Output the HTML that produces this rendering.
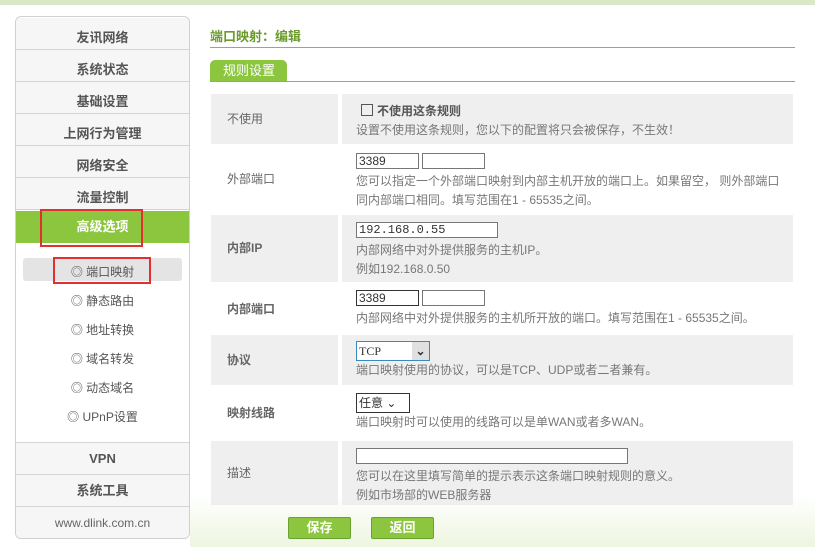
<!DOCTYPE html>
<html><head><meta charset="utf-8"><style>
*{margin:0;padding:0;box-sizing:border-box}
body{width:815px;height:547px;overflow:hidden;background:#fff;font-family:"Liberation Sans","Noto Sans CJK SC",sans-serif;font-size:12px;color:#666;position:relative}
.a{position:absolute}
.top{left:0;top:0;width:815px;height:5px;background:#dbe8c8}
.bg{left:190px;top:495px;width:625px;height:52px;background:linear-gradient(to bottom,#fff,#eef5e0)}
.side{left:15px;top:16px;width:175px;height:523px;border:1px solid #d0d0d0;border-radius:6px;background:#fff;overflow:hidden}
.it{position:absolute;left:0;width:173px;height:32px;line-height:32px;text-align:center;font-weight:bold;font-size:13px;color:#555;border-bottom:1px solid #d4d4d4;background:#f6f6f6;overflow:hidden}
.lo{line-height:40px}
.sub{position:absolute;left:0;width:173px;text-align:center;font-size:12px;color:#555}
.lab{position:absolute;left:211px;width:127px;background:#efefef;padding-left:16px;color:#666}
.val{position:absolute;left:342px;width:451px;background:#efefef;padding-left:14px;line-height:19px;color:#777}
.w{background:#fff}
.in{display:inline-block;height:16px;border:1px solid #777;background:#fff;font-size:12px;line-height:14px;padding-left:2px;color:#333;vertical-align:top}
.btn{position:absolute;top:517px;width:63px;height:22px;background:#8cc63f;border:1px solid #6aa230;color:#fff;font-weight:bold;text-align:center;line-height:20px;font-size:13px;border-radius:2px}
</style></head><body>
<div class="a top"></div>
<div class="a bg"></div>
<div class="a side">
<div class="it lo" style="top:1px">友讯网络</div>
<div class="it lo" style="top:33px">系统状态</div>
<div class="it lo" style="top:65px">基础设置</div>
<div class="it lo" style="top:97px">上网行为管理</div>
<div class="it lo" style="top:129px">网络安全</div>
<div class="it lo" style="top:161px">流量控制</div>
<div class="it" style="top:194px;background:#8cc63f;color:#fff;border:none;height:32px">高级选项</div>
<div class="a" style="left:24px;top:192px;width:103px;height:38px;border:2px solid #e03030"></div>
<div class="a" style="left:7px;top:241px;width:159px;height:23px;background:#e4e4e4;border-radius:3px"></div>
<div class="a" style="left:37px;top:240px;width:98px;height:27px;border:2px solid #e03030"></div>
<div class="sub" style="top:246px">◎ 端口映射</div>
<div class="sub" style="top:275px">◎ 静态路由</div>
<div class="sub" style="top:304px">◎ 地址转换</div>
<div class="sub" style="top:333px">◎ 域名转发</div>
<div class="sub" style="top:362px">◎ 动态域名</div>
<div class="sub" style="top:391px">◎ UPnP设置</div>
<div class="it" style="top:425px;border-top:1px solid #d4d4d4;height:33px">VPN</div>
<div class="it" style="top:458px">系统工具</div>
<div class="it" style="top:490px;font-weight:normal;font-size:12px;color:#666;border:none;height:33px">www.dlink.com.cn</div>
</div>
<div class="a" style="left:210px;top:26px;color:#6a9a2a;font-weight:bold;font-size:13px">端口映射：编辑</div>
<div class="a" style="left:210px;top:47px;width:585px;height:1px;background:#8cb84a"></div>
<div class="a" style="left:210px;top:60px;width:77px;height:22px;background:#8cc63f;border-radius:5px 5px 0 0;color:#fff;font-size:13px;line-height:22px;padding-left:13px">规则设置</div>
<div class="a" style="left:210px;top:81px;width:585px;height:1px;background:#8cb84a"></div>

<div class="lab" style="top:94px;height:50px;line-height:50px">不使用</div>
<div class="val" style="top:94px;height:50px;padding-top:8px"><span style="display:inline-block;width:12px;height:12px;border:1px solid #555;vertical-align:-1px;margin:0 4px 0 5px"></span><b style="color:#555">不使用这条规则</b><br>设置不使用这条规则，您以下的配置将只会被保存，不生效！</div>
<div class="lab w" style="top:146px;height:67px;line-height:67px">外部端口</div>
<div class="val w" style="top:146px;height:67px;padding-top:7px"><span class="in" style="width:63px">3389</span> <span class="in" style="width:63px"></span><br>您可以指定一个外部端口映射到内部主机开放的端口上。如果留空， 则外部端口<br>同内部端口相同。填写范围在1 - 65535之间。</div>
<div class="lab" style="top:215px;height:67px;line-height:67px;font-weight:bold">内部IP</div>
<div class="val" style="top:215px;height:67px;padding-top:7px"><span class="in" style="width:142px;font-family:'Liberation Mono',monospace">192.168.0.55</span><br>内部网络中对外提供服务的主机IP。<br>例如192.168.0.50</div>
<div class="lab w" style="top:283px;height:52px;line-height:52px;font-weight:bold">内部端口</div>
<div class="val w" style="top:283px;height:52px;padding-top:7px"><span class="in" style="width:63px;border-color:#333">3389</span> <span class="in" style="width:63px"></span><br>内部网络中对外提供服务的主机所开放的端口。填写范围在1 - 65535之间。</div>
<div class="lab" style="top:335px;height:50px;line-height:50px;font-weight:bold">协议</div>
<div class="val" style="top:335px;height:50px;padding-top:6px"><span class="in" style="width:74px;height:20px;line-height:18px;border-color:#3a8ac0;position:relative;font-family:'Liberation Serif',serif">TCP<span style="position:absolute;right:0;top:0;width:17px;height:18px;background:#e0e0e0;text-align:center;font-weight:bold">⌄</span></span><br>端口映射使用的协议，可以是TCP、UDP或者二者兼有。</div>
<div class="lab w" style="top:387px;height:52px;line-height:52px;font-weight:bold">映射线路</div>
<div class="val w" style="top:387px;height:52px;padding-top:6px"><span class="in" style="width:54px;height:20px;line-height:18px;border-color:#333">任意 ⌄</span><br>端口映射时可以使用的线路可以是单WAN或者多WAN。</div>
<div class="lab" style="top:441px;height:64px;line-height:64px">描述</div>
<div class="val" style="top:441px;height:64px;padding-top:7px"><span class="in" style="width:272px"></span><br>您可以在这里填写简单的提示表示这条端口映射规则的意义。<br>例如市场部的WEB服务器</div>
<div class="btn" style="left:288px">保存</div>
<div class="btn" style="left:371px">返回</div>
</body></html>
